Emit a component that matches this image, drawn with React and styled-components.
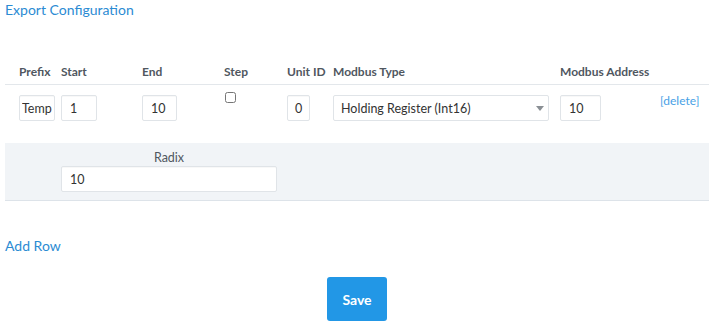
import styled, { createGlobalStyle } from "styled-components";

const GlobalStyle = createGlobalStyle`
  body {
    margin: 0;
    background: #fff;
    font-family: Lato, "Liberation Sans", sans-serif;
  }
`;

const Page = styled.div`
  width: 704px;
  padding-left: 5px;
`;

const TextLink = styled.a`
  display: block;
  color: #2b8bd3;
  font-size: 14px;
  line-height: 20px;
  text-decoration: none;
  margin-top: ${(p) => p.$top || 0}px;
`;

const COLS = "52px 81px 82px 63px 46px 227px 100px 1fr";

const HeaderRow = styled.div`
  display: grid;
  grid-template-columns: ${COLS};
  margin-top: 40px;
  height: 24px;
  border-bottom: 1px solid #e3e7eb;
`;

const Th = styled.div`
  padding-left: ${(p) => (p.$first ? 14 : 4)}px;
  font-size: 12px;
  font-weight: bold;
  line-height: 24px;
  color: #50575f;
  white-space: nowrap;
`;

const DataRow = styled.div`
  display: grid;
  grid-template-columns: ${COLS};
  align-items: start;
  padding: 10px 0 22px;
`;

const Td = styled.div`
  padding-left: ${(p) => (p.$first ? 14 : 4)}px;
  display: flex;
`;

const Input = styled.input`
  box-sizing: border-box;
  width: ${(p) => p.$w}px;
  height: 26px;
  padding: 0 ${(p) => (p.$pad === undefined ? 8 : p.$pad)}px;
  border: 1px solid #e0e4e8;
  border-radius: 2px;
  box-shadow: inset 0 1px 1px rgba(0, 0, 0, 0.03);
  font-family: inherit;
  font-size: 12.5px;
  text-align: ${(p) => (p.$center ? "center" : "left")};
  color: #333;
  background: #fff;
  outline: none;
`;

const Check = styled.input`
  width: 11px;
  height: 11px;
  margin: -3px 0 0 1px;
`;

const SelectBox = styled.div`
  position: relative;
  width: 216px;
`;

const Select = styled.select`
  box-sizing: border-box;
  width: 100%;
  height: 26px;
  padding: 0 7px;
  border: 1px solid #e0e4e8;
  border-radius: 2px;
  background: #fff;
  appearance: none;
  font-family: inherit;
  font-size: 12.5px;
  color: #333;
  outline: none;
`;

const Caret = styled.span`
  position: absolute;
  right: 5px;
  top: 11px;
  width: 0;
  height: 0;
  border-left: 4px solid transparent;
  border-right: 4px solid transparent;
  border-top: 5px solid #8a8f94;
  pointer-events: none;
`;

const DeleteLink = styled.a`
  margin-top: -2px;
  font-size: 12px;
  line-height: 16px;
  color: #48a1e6;
  text-decoration: none;
`;

const SubRow = styled.div`
  background: #f1f4f7;
  border-bottom: 1px solid #dde3e9;
  padding: 6px 0 8px 56px;
`;

const RadixBlock = styled.div`
  width: 216px;
  display: flex;
  flex-direction: column;
  align-items: center;
`;

const RadixLabel = styled.label`
  font-size: 12.5px;
  line-height: 17px;
  color: #50575f;
`;

const Footer = styled.div`
  display: flex;
  justify-content: center;
  margin-top: 21px;
`;

const SaveButton = styled.button`
  width: 60px;
  height: 44px;
  border: none;
  border-radius: 3px;
  background: #2297e6;
  color: #fff;
  font-family: inherit;
  font-size: 14px;
  font-weight: bold;
`;

const headers = [
  "Prefix",
  "Start",
  "End",
  "Step",
  "Unit ID",
  "Modbus Type",
  "Modbus Address",
  "",
];

const App = () => {
  return (
    <Page>
      <GlobalStyle />
      <TextLink href="#">Export Configuration</TextLink>

      <HeaderRow>
        {headers.map((h, i) => (
          <Th key={i} $first={i === 0}>
            {h}
          </Th>
        ))}
      </HeaderRow>

      <DataRow>
        <Td $first>
          <Input $w={36} $pad={2} defaultValue="Temp" />
        </Td>
        <Td>
          <Input $w={36} defaultValue="1" />
        </Td>
        <Td>
          <Input $w={35} defaultValue="10" />
        </Td>
        <Td>
          <Check type="checkbox" />
        </Td>
        <Td>
          <Input $w={23} $pad={0} $center defaultValue="0" />
        </Td>
        <Td>
          <SelectBox>
            <Select defaultValue="hr16">
              <option value="hr16">Holding Register (Int16)</option>
            </Select>
            <Caret />
          </SelectBox>
        </Td>
        <Td>
          <Input $w={41} defaultValue="10" />
        </Td>
        <Td>
          <DeleteLink href="#">[delete]</DeleteLink>
        </Td>
      </DataRow>

      <SubRow>
        <RadixBlock>
          <RadixLabel>Radix</RadixLabel>
          <Input $w={216} defaultValue="10" />
        </RadixBlock>
      </SubRow>

      <TextLink href="#" $top={35}>
        Add Row
      </TextLink>

      <Footer>
        <SaveButton>Save</SaveButton>
      </Footer>
    </Page>
  );
};

export default App;
